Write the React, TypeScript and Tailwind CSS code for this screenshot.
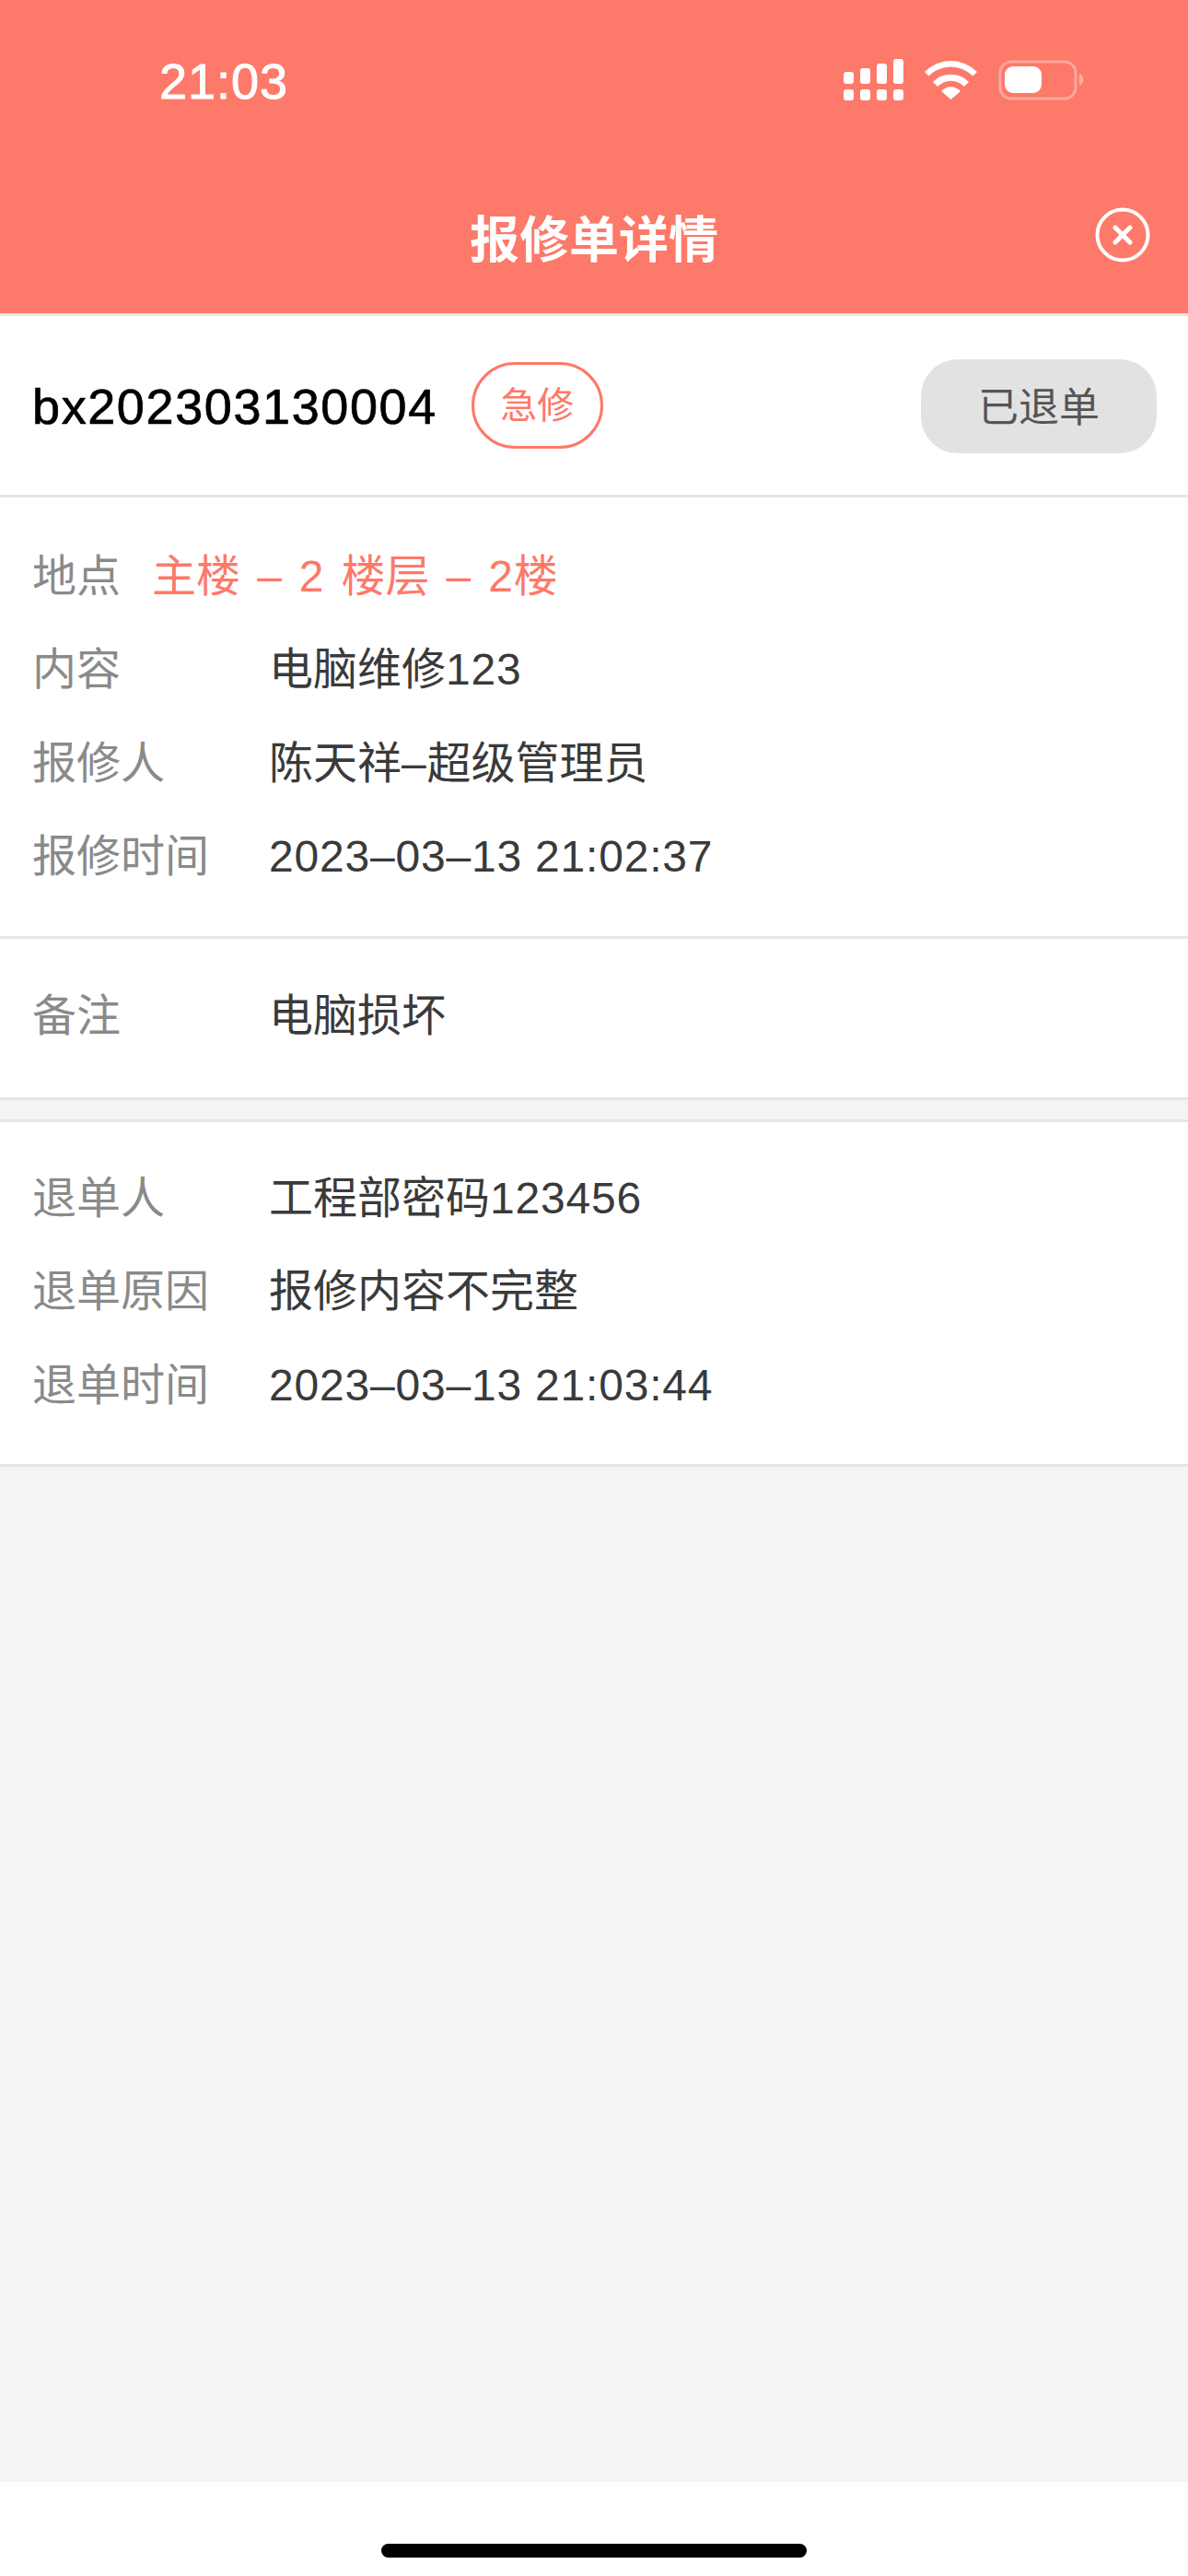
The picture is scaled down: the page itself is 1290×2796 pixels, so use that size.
const FONT = "font-['Liberation_Sans','Noto_Sans_CJK_SC',sans-serif]";

function StatusIcons() {
  return (
    <svg width="262" height="45" viewBox="0 0 262 45" fill="none">
      <g fill="#fff">
        <rect x="0" y="14" width="11" height="13" rx="3" />
        <rect x="18" y="10" width="11" height="17" rx="3" />
        <rect x="36" y="5" width="11" height="22" rx="3" />
        <rect x="54" y="0" width="11" height="27" rx="3" />
        <rect x="0" y="33" width="11" height="12" rx="3" />
        <rect x="18" y="33" width="11" height="12" rx="3" />
        <rect x="36" y="33" width="11" height="12" rx="3" />
        <rect x="54" y="33" width="11" height="12" rx="3" />
        <path d="M88 14 a40 40 0 0 1 57 0 l-4.500 4.500 a34 34 0 0 0 -48 0 z" />
        <path d="M97 25 a27 27 0 0 1 39 0 l-5 5 a20 20 0 0 0 -29 0 z" />
        <path d="M106 35 a14 14 0 0 1 21 0 l-10.500 9 z" />
      </g>
      <rect x="170" y="3" width="82" height="40" rx="12" stroke="#fff" strokeOpacity="0.35" strokeWidth="3" />
      <rect x="175" y="8" width="40" height="29" rx="9" fill="#fff" />
      <path d="M256 16 a7 7 0 0 1 0 13 z" fill="#fff" fillOpacity="0.4" />
    </svg>
  );
}

function CloseIcon() {
  return (
    <svg width="60" height="60" viewBox="0 0 60 60" fill="none" stroke="#fff">
      <circle cx="30" cy="30" r="27.500" strokeWidth="4" />
      <path d="M22 22 L38 38 M38 22 L22 38" strokeWidth="5" strokeLinecap="round" />
    </svg>
  );
}

// latin runs sit a bit wider in the reference font
function Mixed({ text }: { text: string }) {
  return (
    <>
      {text.split(/([\x00-\x7f–]+)/).map((part, i) =>
        i % 2 === 1 ? (
          <span key={i} className="tracking-[0.8px]">
            {part}
          </span>
        ) : (
          part
        ),
      )}
    </>
  );
}

function Row({ label, value }: { label: string; value: string }) {
  return (
    <div className="flex h-[101.500px] items-center">
      <span className="w-[258px] shrink-0 text-[#8a8a8a]">{label}</span>
      <span className="-ml-px text-[#3a3a3a]">
        <Mixed text={value} />
      </span>
    </div>
  );
}

export default function App() {
  return (
    <div className={`flex h-[2796px] w-[1290px] flex-col overflow-hidden bg-[#f4f4f4] text-[48px] ${FONT}`}>
      <div className="bg-[#fd7969] text-white">
        <div className="flex h-[178px] items-start justify-between pl-[173px] pr-[112px]">
          <span className="mt-[60px] text-[54px] leading-[56px] tracking-[1px] [-webkit-text-stroke:1px_white]">21:03</span>
          <div className="mt-[64px]">
            <StatusIcons />
          </div>
        </div>
        <div className="relative flex h-[162px] items-center justify-center">
          <span className="mt-[5px] text-[54px] font-bold">报修单详情</span>
          <div className="absolute right-[41px] top-[47px]">
            <CloseIcon />
          </div>
        </div>
      </div>

      <div className="flex h-[200px] items-center border-y-[3px] border-[#e6e6e6] bg-white pl-[35px] pr-[34px]">
        <span className="pt-[2px] text-[54px] tracking-[1.600px] text-black [-webkit-text-stroke:0.7px_black]">bx202303130004</span>
        <span className="ml-[37px] flex h-[94px] w-[143px] items-center justify-center rounded-[47px] border-[3px] border-[#fd7969] text-[40px] text-[#fd7969]">
          急修
        </span>
        <span className="mt-[2px] ml-auto flex h-[102px] w-[256px] items-center justify-center rounded-[40px] bg-[#e2e2e2] pt-[3px] text-[44px] text-[#555555]">
          已退单
        </span>
      </div>

      <div className="flex h-[479px] flex-col justify-center border-b-[3px] border-[#e6e6e6] bg-white px-[35px]">
        <div className="flex h-[101.500px] items-center">
          <span className="w-[130px] shrink-0 text-[#8a8a8a]">地点</span>
          <span className="text-[#fd7969] [word-spacing:4px]">
            <Mixed text="主楼 – 2 楼层 – 2楼" />
          </span>
        </div>
        <Row label="内容" value="电脑维修123" />
        <Row label="报修人" value="陈天祥–超级管理员" />
        <Row label="报修时间" value="2023–03–13 21:02:37" />
      </div>

      <div className="flex h-[175px] items-center border-b-[3px] border-[#e6e6e6] bg-white px-[35px] pb-[5px]">
        <Row label="备注" value="电脑损坏" />
      </div>

      <div className="mt-[21px] flex h-[377px] flex-col justify-center border-y-[3px] border-[#e6e6e6] bg-white px-[35px] pb-[3px]">
        <Row label="退单人" value="工程部密码123456" />
        <Row label="退单原因" value="报修内容不完整" />
        <Row label="退单时间" value="2023–03–13 21:03:44" />
      </div>

      <div className="mt-auto flex h-[102px] justify-center bg-white pt-[67px]">
        <div className="h-[15px] w-[462px] rounded-full bg-black" />
      </div>
    </div>
  );
}
